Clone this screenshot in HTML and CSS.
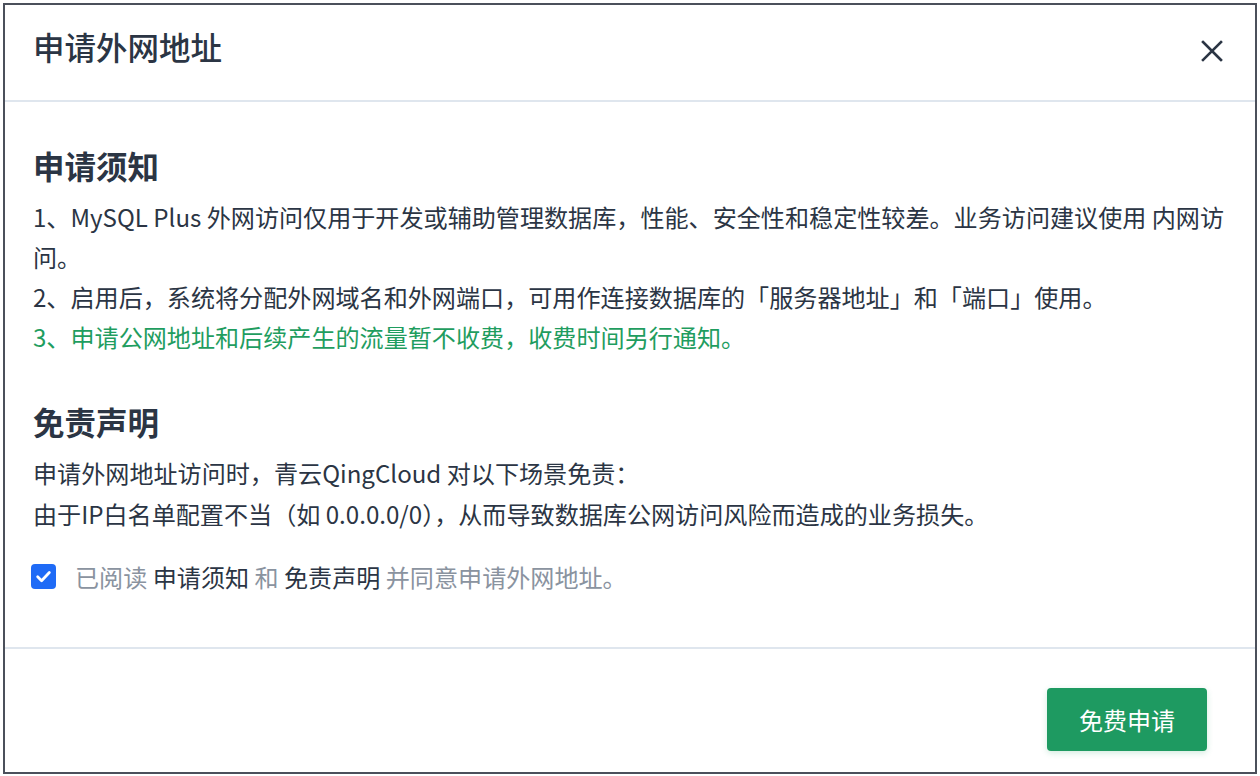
FILE: index.html
```html
<!DOCTYPE html>
<html lang="zh-CN">
<head>
<meta charset="utf-8">
<title>申请外网地址</title>
<link rel="stylesheet" href="styles.css">
</head>
<body>
<div class="modal">
  <header class="modal-header">
    <h1 class="modal-title">申请外网地址</h1>
    <button class="close" aria-label="关闭">
      <svg width="22" height="22" viewBox="0 0 22 22"><path d="M2 2L20 20M20 2L2 20" stroke="#2b3544" stroke-width="2.6" stroke-linecap="square" fill="none"/></svg>
    </button>
  </header>
  <main class="modal-body">
    <h2 class="section-title">申请须知</h2>
    <div class="para">
      <p>1、MySQL Plus 外网访问仅用于开发或辅助管理数据库，性能、安全性和稳定性较差。业务访问建议使用 内网访问。</p>
      <p>2、启用后，系统将分配外网域名和外网端口，可用作连接数据库的「服务器地址」和「端口」使用。</p>
      <p class="green">3、申请公网地址和后续产生的流量暂不收费，收费时间另行通知。</p>
    </div>
    <h2 class="section-title second">免责声明</h2>
    <div class="para para2">
      <p>申请外网地址访问时，青云QingCloud 对以下场景免责：</p>
      <p>由于IP白名单配置不当（如 0.0.0.0/0），从而导致数据库公网访问风险而造成的业务损失。</p>
    </div>
    <label class="agree">
      <span class="checkbox"><svg width="17" height="17" viewBox="0 0 16 16"><path d="M2.5 8.3L6.2 12L13.5 4.2" stroke="#fff" stroke-width="2.6" fill="none" stroke-linecap="round" stroke-linejoin="round"/></svg></span>
      <span class="agree-text">已阅读 <b>申请须知</b> 和 <b>免责声明</b> 并同意申请外网地址。</span>
    </label>
  </main>
  <footer class="modal-footer">
    <button class="primary">免费申请</button>
  </footer>
</div>
</body>
</html>
```
FILE: styles.css
```css
* { box-sizing: border-box; }
html, body { margin: 0; padding: 0; background: #fff; }
body {
  font-family: "Noto Sans CJK SC", "Noto Sans", sans-serif;
  color: #2b3544;
}
.modal {
  margin: 3px;
  width: 1254px;
  height: 771px;
  border: 2px solid #4b505b;
  display: flex;
  flex-direction: column;
  background: #fff;
}
.modal-header {
  height: 97px;
  flex: none;
  border-bottom: 2px solid #dfe6ee;
  display: flex;
  align-items: center;
  justify-content: space-between;
  padding: 0 32px 4px 28px;
}
.modal-title {
  margin: 0 0 10px 0;
  font-size: 31.5px;
  font-weight: 500;
  line-height: 44px;
  color: #2b3544;
}
.close {
  border: 0;
  background: none;
  padding: 0;
  width: 22px;
  height: 22px;
  display: flex;
  cursor: pointer;
}
.modal-body {
  flex: 1;
  padding: 41px 28px 0 28px;
  border-bottom: 2px solid #dfe6ee;
}
.section-title {
  margin: 0 0 10px 0;
  font-size: 31.5px;
  font-weight: 600;
  line-height: 44px;
  color: #2b3544;
}
.section-title.second { margin-top: 42px; margin-bottom: 9px; }
.para p {
  margin: 0;
  font-size: 24.1px;
  line-height: 40px;
  color: #2b3544;
}
.para2 p { line-height: 41px; }
.para p.green { color: #1f9d5f; }
.agree {
  margin-top: 22px;
  display: flex;
  align-items: center;
  height: 40px;
  font-size: 24.1px;
  color: #8a939f;
}
.checkbox {
  flex: none;
  width: 25px;
  height: 25px;
  border-radius: 4px;
  background: #1f6bf6;
  display: flex;
  align-items: center;
  justify-content: center;
  margin-left: -2px;
  margin-right: 19px;
}
.agree-text b { font-weight: 400; color: #2b3544; }
.modal-footer {
  flex: none;
  height: 123px;
  display: flex;
  justify-content: flex-end;
  align-items: flex-start;
  padding: 39px 48px 0 0;
}
.primary {
  width: 160px;
  height: 63px;
  border: 0;
  border-radius: 4px;
  background: #1e9a61;
  color: #fff;
  font-family: inherit;
  font-size: 24px;
  box-shadow: 0 2px 6px rgba(30, 154, 97, 0.2);
  cursor: pointer;
}
```
